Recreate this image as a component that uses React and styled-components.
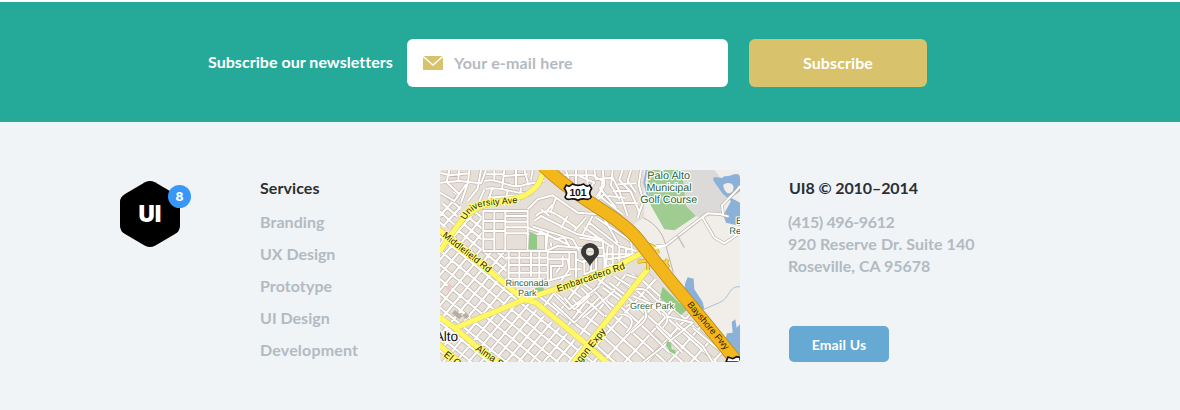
import React from 'react';
import styled, { createGlobalStyle } from 'styled-components';

const GlobalStyle = createGlobalStyle`
  * { box-sizing: border-box; }
  body {
    margin: 0;
    background: #fff;
    font-family: Lato, 'Open Sans', sans-serif;
    font-weight: 700;
    font-size: 16px;
  }
`;

const Page = styled.div`
  width: 1180px;
  height: 410px;
  padding-top: 2px;
  display: flex;
  flex-direction: column;
  overflow: hidden;
`;

const SubscribeBar = styled.form`
  flex: 0 0 120px;
  display: flex;
  align-items: center;
  padding: 2px 0 0 208px;
  background: #25aa99;
`;

const SubscribeLabel = styled.label`
  width: 199px;
  padding-bottom: 3px;
  line-height: 24px;
  color: #fff;
  white-space: nowrap;
  letter-spacing: 0.04px;
`;

const EmailField = styled.div`
  width: 321px;
  height: 48px;
  margin-right: 21px;
  padding: 0 16px;
  display: flex;
  align-items: center;
  gap: 11px;
  border-radius: 6px;
  background: #fff;
`;

const EmailInput = styled.input`
  flex: 1;
  min-width: 0;
  padding: 0 0 2px;
  border: 0;
  outline: 0;
  background: none;
  font: inherit;
  letter-spacing: 0.17px;
  &::placeholder { color: #b3bac1; opacity: 1; }
`;

const Button = styled.button`
  width: ${(p) => p.$width}px;
  height: ${(p) => p.$height}px;
  padding: 0 0 ${(p) => p.$lift || 0}px;
  border: 0;
  border-radius: ${(p) => p.$radius}px;
  background: ${(p) => p.$color};
  color: #fff;
  font: inherit;
  font-size: ${(p) => p.$size}px;
  letter-spacing: ${(p) => p.$track || 0}px;
`;

const Footer = styled.footer`
  flex: 1;
  display: flex;
  align-items: flex-start;
  padding: 48px 0 0 120px;
  background: #f0f4f7;
`;

const Logo = styled.div`
  position: relative;
  width: 60px;
  height: 66px;
  margin: 11px 80px 0 0;
  display: flex;
  align-items: center;
  justify-content: center;
  font-family: Inter, Lato, sans-serif;
`;

const LogoShape = styled.svg`
  position: absolute;
  inset: 0;
`;

const LogoText = styled.span`
  position: relative;
  color: #fff;
  font-size: 22.5px;
  font-weight: 900;
  line-height: 24px;
`;

const Badge = styled.span`
  position: absolute;
  top: 4px;
  left: 48px;
  width: 23px;
  height: 23px;
  border-radius: 50%;
  background: #3897f8;
  color: #fff;
  font-size: 12px;
  font-weight: 800;
  line-height: 23px;
  text-align: center;
`;

const Column = styled.section`
  width: ${(p) => p.$width}px;
  white-space: nowrap;
`;

const Heading = styled.h2`
  margin: 0;
  font-size: 16px;
  font-weight: 700;
  line-height: 36px;
  color: #2c2f33;
  letter-spacing: ${(p) => p.$track || 0}px;
`;

const ServiceList = styled.ul`
  margin: 0;
  padding: 0;
  list-style: none;
`;

const ServiceItem = styled.li`
  line-height: 32px;
  color: #b3bac1;
  letter-spacing: ${(p) => p.$track || 0}px;
`;

const Address = styled.address`
  margin: 5px 0 49px -1px;
  font-style: normal;
  line-height: 22px;
  color: #b3bac1;
`;

const AddressLine = styled.div`
  letter-spacing: ${(p) => p.$track}px;
`;

const MapFrame = styled.div`
  width: 300px;
  height: 192px;
  margin-right: 49px;
  border-radius: 4px;
  overflow: hidden;
`;

const MapSvg = styled.svg`
  display: block;
  font-family: 'Liberation Sans', Arial, sans-serif;
  font-weight: 400;
  text-rendering: geometricPrecision;
`;

// Two sets of parallel streets, turned by `angle` about (cx, cy).
function gridPath(cx, cy, angle, stepA, stepB, half) {
  const r = (angle * Math.PI) / 180;
  const c = Math.cos(r);
  const s = Math.sin(r);
  const pt = (u, v) => `${(cx + u * c - v * s).toFixed(1)} ${(cy + u * s + v * c).toFixed(1)}`;
  let d = '';
  for (let v = -half; v <= half; v += stepA) d += `M${pt(-half, v)}L${pt(half, v)}`;
  for (let u = -half; u <= half; u += stepB) d += `M${pt(u, -half)}L${pt(u, half)}`;
  return d;
}

const grids = [
  { id: 'downtown', area: '12,195 262,402 505,590 12,590', d: gridPath(200, 440, 39.5, 33, 29, 420) },
  { id: 'crescent', area: '40,215 85,150 140,130 140,258 212,258 212,345', d: gridPath(130, 220, 40, 25, 29, 180) },
  { id: 'west', area: '12,120 60,70 75,125 50,190 12,180', d: gridPath(40, 130, 42, 24, 28, 120) },
  { id: 'south', area: '285,395 440,340 630,318 440,535', d: gridPath(450, 440, 37, 37, 46, 250) },
  { id: 'southeast', area: '640,320 770,455 890,590 515,590 455,540', d: gridPath(650, 460, 42, 34, 49, 270) },
];

const streets = `
M12 50L70 45L135 52L150 12M12 80L55 105L90 55M40 12L32 48L70 85M70 12L66 48M100 12L96 50L75 110
M135 12L125 68L95 105M12 20L40 28L100 22M145 45C190 32 220 75 270 55L325 45
M150 68C210 58 230 90 292 80M175 12V40M205 12L198 70M240 12V62M265 12L278 58M290 12L285 40
M150 25H205M205 30L275 25M155 95L285 85M130 105L145 70M170 65L158 100M215 75L205 120M255 65L250 105
M142 135H275V255H142ZM175 135V165M142 165H208M142 195H208M175 165V255M208 135V255M208 150H275M208 167H275M208 184H275M208 202H275
M275 185L330 205V252M275 205H330M142 220H175M205 255H335V345H218V255M250 255V345M285 255V330M310 255V340
M205 275H335M215 297H335M218 320H335M218 338H320
M275 130L305 100L350 88L425 140L490 145M300 150C330 120 360 140 420 185M295 165L315 150L425 205L500 220
M290 182L410 220L430 255M310 195L395 235M315 130L340 150M350 115L330 138M360 95L345 135
M395 150L375 185M450 155L415 195M470 150L440 205M335 200L330 255L365 240L430 245M355 220L385 215L400 240M345 240V230
M335 258H420V335M335 280H395L400 310L375 345M345 345V300H380V270M335 345L405 325M360 320L372 305
M400 260V310H435M420 280L445 290V325L480 310V270H505V325M440 285H465V315M410 245H500
M430 215L500 225L510 325M445 185L530 245M460 170L550 240L600 255M480 155L585 225L590 270M500 150L545 230
M515 240L510 300L545 295L590 280M530 235V295M550 240V295M570 245V285M500 265H600M515 280L600 268M465 240V270
M390 12L400 50M420 12V55M450 12L455 55M365 12L370 28H470L500 45L490 90L560 145M430 30L475 50L455 75M475 12L480 40L530 35L550 75L575 150
M500 12L505 58L480 95M530 12L525 58L550 100M560 12L550 42L585 78L610 138M585 12L575 45L600 80M615 12L608 55L622 105L605 155
M545 55L600 52M530 75L585 75M515 90L568 95M540 110L606 112M490 65L540 125M470 110L505 85
M355 385L400 430L490 360M385 395L415 430L460 390L435 365M410 400L425 415L445 392M350 410L415 470L490 395M440 455L535 375
M500 365L550 400M520 350L572 390M550 340L590 365M570 325L612 340M480 380L525 430M460 410L505 450
M600 370C650 360 640 410 690 410M590 390L650 415L675 445M570 420C610 400 650 440 620 470L585 500
M550 445C590 445 600 470 570 500M650 425C690 430 710 455 680 485M690 450L770 470L620 590M720 470L800 540L830 588M770 485L845 548
M640 500L700 560M660 480L740 560`;

const outerRoads = `M660 240L690 238L790 160L815 142L855 145L878 152M800 155L835 215L865 232L905 205M862 150L858 118L905 70L912 60`;

const arterials = [
  'M325 8C312 55 300 68 270 86C225 106 170 104 130 123C90 143 75 165 48 202L12 255',
  'M8 190L60 232L165 318L262 400L300 410L440 525L515 592',
  'M8 452L55 485L120 540L190 592',
  'M55 487L262 402L400 355L530 308L615 262',
  'M636 308L560 405L460 530L410 592',
  'M8 535L75 592',
];

const highway = 'M322 0C365 42 415 78 460 108C520 147 575 180 610 226C650 278 698 340 760 412L915 602';

function CityMap() {
  return (
    <MapSvg width="300" height="192" viewBox="12 12 900 576" aria-label="Map of Palo Alto">
      <defs>
        {grids.map((g) => (
          <clipPath id={g.id} key={g.id}><polygon points={g.area} /></clipPath>
        ))}
        <path id="university" d="M89 163C110 117 150 120 180 116L280 108" />
        <path id="middlefield" d="M18 211L185 343" />
        <path id="embarcadero" d="M366 378L590 300" />
        <path id="bayshore" d="M752 416L895 586" />
        <path id="oregon" d="M424 603L532 470" />
        <path id="alma" d="M117 552L230 629" />
        <path id="camino" d="M22 569L90 622" />
      </defs>

      <rect x="0" y="0" width="930" height="600" fill="#e6dfd7" />
      <path d="M624 12H912V588H890L650 270L585 180L625 155Z" fill="#f1eee9" />
      <path d="M735 12H835L880 70L855 145L790 155L748 132Z" fill="#dcdad8" />
      <path d="M633 12H738L750 120L780 150L716 193L685 190L640 110Z" fill="#9fcd91" />
      <path d="M632 12L625 50L642 112" fill="none" stroke="#91b4d8" strokeWidth="6" />
      <path d="M835 48C820 20 860 45 865 30C880 35 910 10 912 35V75L885 95L912 110V180L870 170L862 148L885 105L860 83Z" fill="#8cb1d9" />
      <path d="M862 56C880 44 900 56 890 76C878 90 862 76 862 56Z" fill="#f1eee9" />
      <path d="M748 350L755 334L773 338L775 370L800 408L805 428L785 432L742 382Z" fill="#8cb1d9" />
      <path d="M912 588L865 530L873 502L890 500L887 468L898 460L902 485L912 475Z" fill="#8cb1d9" />
      <path d="M798 432L850 410C885 395 875 360 912 362" fill="none" stroke="#a9c0dc" strokeWidth="3" />
      <path d="M12 500L80 540L125 588H12Z" fill="#e7e4df" />

      <g fill="none" strokeLinejoin="round">
        {grids.map((g) => (
          <g key={g.id} clipPath={`url(#${g.id})`}>
            <path d={g.d} stroke="#c3bab0" strokeWidth="11" />
            <path d={g.d} stroke="#fff" strokeWidth="6.5" />
          </g>
        ))}
        <path d={streets} stroke="#c0b7ad" strokeWidth="10" />
        <path d={streets} stroke="#fff" strokeWidth="6" />
        <path d="M622 155C660 175 680 200 690 240L712 320" stroke="#bcb4ab" strokeWidth="3" />
        <path d={outerRoads} stroke="#bcb4ab" strokeWidth="10" />
        <path d={outerRoads} stroke="#fff" strokeWidth="6" />
        <path d="M724 208L745 245" stroke="#c7bfb8" strokeWidth="4" />
      </g>

      <path d="M280 197L303 206V250H277Z" fill="#93c987" />
      <path d="M298 366L320 362L328 378L295 388Z" fill="#93c987" />
      <path d="M680 362L752 432L735 447L672 396Z" fill="#93c987" />
      <path d="M694 523L706 533V550L718 552L718 566L703 558L690 536Z" fill="#93c987" />
      <path d="M38 355L49 366L39 378L28 367Z" fill="#eccaca" />
      <path d="M57 432L80 450L70 460L47 442ZM88 440L100 450L91 460L80 450Z" fill="#b9ada3" />

      <g fill="none" strokeLinejoin="round">
        {arterials.map((d) => <path key={d} d={d} stroke="#d2c875" strokeWidth="18" />)}
        {arterials.map((d) => <path key={d} d={d} stroke="#fff862" strokeWidth="15" />)}
        <g stroke="#c3a02b" strokeWidth="12">
          <path d="M622 240C640 230 665 245 665 262M605 287L655 280L690 292L698 305M636 312V280M675 315L695 280" />
        </g>
        <g stroke="#fbd34a" strokeWidth="8">
          <path d="M622 240C640 230 665 245 665 262M605 287L655 280L690 292L698 305M636 312V280M675 315L695 280" />
        </g>
        <path d={highway} stroke="#bd8b18" strokeWidth="40" />
        <path d={highway} stroke="#f3b71c" strokeWidth="35" />
        <path d="M655 247L690 238" stroke="#fff" strokeWidth="7" />
      </g>

      <g fontSize="29" fill="#252500" stroke="#fff97a" strokeWidth="7" paintOrder="stroke" strokeLinejoin="round">
        <text fontSize="27.5"><textPath href="#university">University Ave</textPath></text>
        <text fontSize="28"><textPath href="#middlefield">Middlefield Rd</textPath></text>
        <text fontSize="28.3"><textPath href="#embarcadero">Embarcadero Rd</textPath></text>
        <text><textPath href="#oregon">egon Expy</textPath></text>
        <text><textPath href="#alma">Alma St</textPath></text>
        <text><textPath href="#camino">El Camino</textPath></text>
      </g>
      <text fontSize="28.3" fill="#342400"><textPath href="#bayshore">Bayshore Fwy</textPath></text>

      <g fill="#2c5f38" stroke="#fff" strokeWidth="7" paintOrder="stroke" strokeLinejoin="round">
        <text x="698" y="38" fontSize="32.5" textAnchor="middle">Palo Alto</text>
        <text x="699" y="74" fontSize="32" textAnchor="middle">Municipal</text>
        <text x="698" y="110" fontSize="32" textAnchor="middle">Golf Course</text>
        <text x="273" y="360" fontSize="27" textAnchor="middle">Rinconada</text>
        <text x="274" y="389" fontSize="27" textAnchor="middle">Park</text>
        <text x="648" y="428" fontSize="27" textAnchor="middle">Greer Park</text>
        <text x="900" y="174" fontSize="28">E</text>
        <text x="880" y="204" fontSize="28">Re</text>
      </g>
      <text x="-4" y="524" fontSize="41" fill="#111" stroke="#fff" strokeWidth="8" paintOrder="stroke">Alto</text>

      <path d="M391 57Q399 65 409 54Q426 62 443 54Q453 65 461 57L467 68Q456 80 466 93Q461 103 447 99Q435 98 426 103Q417 98 405 99Q391 103 387 93Q397 80 385 68Z" fill="#fff" stroke="#111" strokeWidth="5" strokeLinejoin="round" />
      <text x="426" y="89" fontSize="31" fontWeight="700" fill="#111" textAnchor="middle">101</text>
      <path d="M870 588L876 573L890 578L902 572L912 574V588Z" fill="#fff" stroke="#111" strokeWidth="5" />
      <path d="M462 301C453 281 435 273 435 258A27 27 0 1 1 489 258C489 273 471 281 462 301Z" fill="#383838" />
      <circle cx="462" cy="257" r="12" fill="#eee8df" />
      <path d="M451 257H473" stroke="#cfc8c0" strokeWidth="3" />
    </MapSvg>
  );
}

const services = [
  ['Branding', 0.07], ['UX Design', -0.04], ['Prototype', 0.08], ['UI Design', 0], ['Development', 0.18],
];

export default function App() {
  return (
    <>
      <GlobalStyle />
      <Page>
        <SubscribeBar onSubmit={(e) => e.preventDefault()}>
          <SubscribeLabel htmlFor="email">Subscribe our newsletters</SubscribeLabel>
          <EmailField>
            <svg width="20" height="14" viewBox="0 0 20 14">
              <rect width="20" height="14" rx="0.5" fill="#d9c26c" />
              <path d="M0 0.3L10 9L20 0.3" fill="none" stroke="#fff" strokeWidth="1.4" />
            </svg>
            <EmailInput id="email" type="email" placeholder="Your e-mail here" />
          </EmailField>
          <Button $width={178} $height={48} $radius={6} $color="#d9c26c" $size={16} $lift={2} $track={0.1}>Subscribe</Button>
        </SubscribeBar>
        <Footer>
          <Logo>
            <LogoShape width="60" height="66" viewBox="0 0 60 66">
              <path d="M25 1.3Q30-1.2 35 1.3L55 13Q60 16 60 21V45Q60 50 55 53L35 64.7Q30 67.2 25 64.7L5 53Q0 50 0 45V21Q0 16 5 13Z" />
            </LogoShape>
            <LogoText>UI</LogoText>
            <Badge>8</Badge>
          </Logo>
          <Column $width={180}>
            <Heading $track={0.08}>Services</Heading>
            <ServiceList>
              {services.map(([name, track]) => (
                <ServiceItem key={name} $track={track}>{name}</ServiceItem>
              ))}
            </ServiceList>
          </Column>
          <MapFrame><CityMap /></MapFrame>
          <Column $width={200}>
            <Heading $track={-0.1}>UI8 © 2010–2014</Heading>
            <Address>
              <AddressLine $track={-0.35}>(415) 496-9612</AddressLine>
              <AddressLine $track={0.06}>920 Reserve Dr. Suite 140</AddressLine>
              <AddressLine $track={0}>Roseville, CA 95678</AddressLine>
            </Address>
            <Button $width={100} $height={36} $radius={5} $color="#66a9d2" $size={14} $track={0.15}>Email Us</Button>
          </Column>
        </Footer>
      </Page>
    </>
  );
}
